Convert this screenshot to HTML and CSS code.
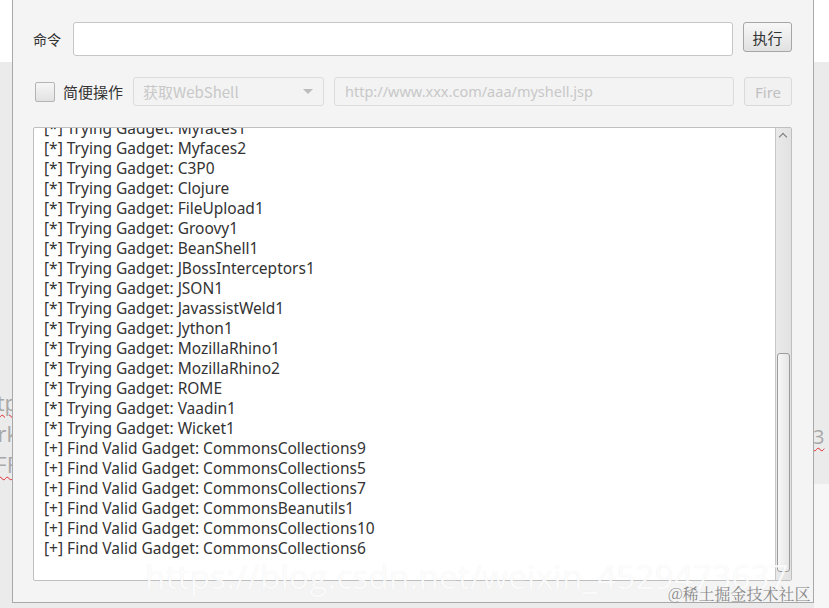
FILE: index.html
```html
<!DOCTYPE html>
<html lang="zh-CN">
  <head>
    <meta charset="UTF-8" />
    <title>执行命令</title>
    <link rel="stylesheet" href="styles.css">
  </head>

  <body>
    <div class="desk">
      <!-- page behind the dialog, left side -->
      <div class="side side-left">
        <p class="behind-line squiggle">tp</p>
        <p class="behind-line">rk</p>
        <p class="behind-line squiggle">FF</p>
      </div>

      <!-- dialog -->
      <div class="dialog">
        <div class="row row-cmd">
          <label class="label" for="cmd">命令</label>
          <input class="field" id="cmd" type="text" />
          <button class="btn">执行</button>
        </div>

        <div class="row row-shell">
          <span class="check"></span>
          <span class="label label-big">简便操作</span>
          <div class="select disabled">
            <span>获取WebShell</span>
            <span class="caret"></span>
          </div>
          <div class="field field-url disabled">http://www.xxx.com/aaa/myshell.jsp</div>
          <button class="btn btn-fire" disabled>Fire</button>
        </div>

        <div class="log">
          <div class="log-text" id="logText"></div>
          <div class="scrollbar">
            <div class="arrow-up"></div>
            <div class="track">
              <div class="thumb"></div>
            </div>
          </div>
        </div>
      </div>

      <!-- page behind the dialog, right side -->
      <div class="side side-right">
        <p class="behind-line squiggle">3</p>
      </div>

      <div class="mark-csdn">https://blog.csdn.net/weixin_4529473637</div>
      <div class="mark-juejin">@稀土掘金技术社区</div>
    </div>

    <script>
      var lines = [
        "[*] Trying Gadget: Myfaces1",
        "[*] Trying Gadget: Myfaces2",
        "[*] Trying Gadget: C3P0",
        "[*] Trying Gadget: Clojure",
        "[*] Trying Gadget: FileUpload1",
        "[*] Trying Gadget: Groovy1",
        "[*] Trying Gadget: BeanShell1",
        "[*] Trying Gadget: JBossInterceptors1",
        "[*] Trying Gadget: JSON1",
        "[*] Trying Gadget: JavassistWeld1",
        "[*] Trying Gadget: Jython1",
        "[*] Trying Gadget: MozillaRhino1",
        "[*] Trying Gadget: MozillaRhino2",
        "[*] Trying Gadget: ROME",
        "[*] Trying Gadget: Vaadin1",
        "[*] Trying Gadget: Wicket1",
        "[+] Find Valid Gadget: CommonsCollections9",
        "[+] Find Valid Gadget: CommonsCollections5",
        "[+] Find Valid Gadget: CommonsCollections7",
        "[+] Find Valid Gadget: CommonsBeanutils1",
        "[+] Find Valid Gadget: CommonsCollections10",
        "[+] Find Valid Gadget: CommonsCollections6"
      ];

      var logText = document.getElementById("logText");
      lines.forEach(function (line) {
        var div = document.createElement("div");
        div.className = "log-line";
        div.textContent = line;
        logText.appendChild(div);
      });
    </script>
  </body>
</html>
```

FILE: styles.css
```css
* {
  margin: 0;
  padding: 0;
  box-sizing: border-box;
}

body {
  width: 829px;
  height: 608px;
  overflow: hidden;
  font-family: "Noto Sans CJK SC", "Open Sans", sans-serif;
  color: #333;
}

.desk {
  position: relative;
  display: flex;
  height: 608px;
  background: linear-gradient(#fff 0, #fff 62px, #ebebeb 62px);
}

.side {
  overflow: hidden;
  font-family: "Open Sans", sans-serif;
  color: #a8a8a8;
  font-size: 22px;
  line-height: 31px;
}

.side-left {
  width: 12px;
  padding-top: 387px;
  display: flex;
  flex-direction: column;
  align-items: flex-end;
}

.side-left .behind-line {
  margin-right: -6px;
}

.side-right {
  flex: 1;
  padding-top: 421px;
  background: linear-gradient(transparent 0, transparent 484px, #f6f6f6 484px);
}

.side-right .behind-line {
  margin-left: -1px;
  font-size: 20px;
}

.squiggle {
  text-decoration: underline wavy #e0282d;
  text-decoration-thickness: 1px;
  text-underline-offset: 3px;
}

.dialog {
  width: 802px;
  height: 603px;
  background-color: #f4f4f4;
  border: 1px solid #a9a9a9;
  border-top: none;
  padding: 22px 21px 21px 20px;
  display: flex;
  flex-direction: column;
  gap: 21px;
}

.row {
  display: flex;
  align-items: flex-start;
}

.label {
  font-size: 14px;
  line-height: 34px;
  width: 40px;
  color: #333;
}

.field {
  height: 34px;
  flex: 1;
  background-color: #fff;
  border: 1px solid #c6c6c6;
  border-radius: 3px;
  font-size: 15px;
  outline: none;
}

.btn {
  height: 30px;
  width: 49px;
  margin-left: 10px;
  border: 1px solid #a6a6a6;
  border-radius: 3px;
  background: linear-gradient(#f7f7f7, #e1e1e1);
  font-family: "Noto Sans CJK SC", sans-serif;
  font-size: 15px;
  color: #333;
}

.row-shell {
  height: 29px;
  align-items: center;
}

.check {
  width: 20px;
  height: 20px;
  margin-left: 2px;
  border: 1px solid #b4b4b4;
  border-radius: 2px;
  background: linear-gradient(#f6f6f6, #e2e2e2);
}

.label-big {
  width: auto;
  font-size: 15px;
  margin-left: 8px;
  line-height: 29px;
}

.disabled {
  background-color: #f3f3f3;
  border: 1px solid #dcdcdc;
  border-radius: 3px;
  color: #c8c8c8;
  font-size: 15px;
}

.select {
  width: 191px;
  height: 29px;
  margin-left: 10px;
  padding: 0 10px 0 9px;
  display: flex;
  align-items: center;
  justify-content: space-between;
}

.caret {
  width: 0;
  height: 0;
  border-left: 5px solid transparent;
  border-right: 5px solid transparent;
  border-top: 5px solid #bcbcbc;
}

.field-url {
  height: 29px;
  margin-left: 10px;
  padding-left: 10px;
  line-height: 27px;
  font-family: "Noto Sans", sans-serif;
  font-size: 14.5px;
}

.btn-fire {
  width: 48px;
  height: 29px;
  border-color: #dadada;
  background: #f1f1f1;
  color: #c0c0c0;
  font-family: "Noto Sans", sans-serif;
  font-size: 15px;
}

.log {
  flex: 1;
  display: flex;
  background-color: #fff;
  border: 1px solid #bfbfbf;
  border-radius: 2px;
  overflow: hidden;
}

.log-text {
  flex: 1;
  padding-left: 10px;
  margin-top: -10px;
  font-family: "Noto Sans", sans-serif;
  font-size: 15.5px;
  line-height: 20px;
  color: #333;
}

.log-line {
  white-space: nowrap;
}

.scrollbar {
  width: 16px;
  display: flex;
  flex-direction: column;
  background: linear-gradient(90deg, #e9e9e9, #e2e2e2);
  border-left: 1px solid #c8c8c8;
}

.arrow-up {
  height: 16px;
  position: relative;
}

.arrow-up::before {
  content: "";
  position: absolute;
  left: 4px;
  top: 6px;
  width: 5px;
  height: 5px;
  border-left: 1px solid #777;
  border-top: 1px solid #777;
  transform: rotate(45deg);
}

.track {
  flex: 1;
  display: flex;
  flex-direction: column;
  justify-content: flex-end;
  padding: 0 1px 8px 1px;
}

.thumb {
  height: 219px;
  border: 1px solid #9c9c9c;
  border-radius: 3px;
  background: linear-gradient(90deg, #f7f7f7, #e6e6e6);
}

.mark-csdn {
  position: absolute;
  left: 145px;
  top: 554px;
  font-family: "Open Sans", sans-serif;
  font-size: 33px;
  color: rgba(255, 255, 255, 0.85);
  text-shadow: 0 0 1px rgba(0, 0, 0, 0.08);
  white-space: nowrap;
  letter-spacing: 0.3px;
}

.mark-juejin {
  position: absolute;
  left: 668px;
  top: 582px;
  font-family: "Noto Serif CJK SC", "Liberation Serif", serif;
  font-size: 16px;
  color: #8a8a8a;
  white-space: nowrap;
}
```
